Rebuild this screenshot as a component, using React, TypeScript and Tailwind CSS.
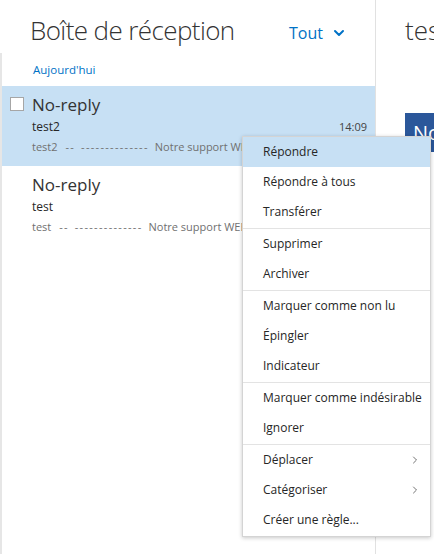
import { ChevronDown, ChevronRight } from "lucide-react";

type MenuItem = { label: string; sub?: boolean; active?: boolean };

const groups: MenuItem[][] = [
  [{ label: "Répondre", active: true }, { label: "Répondre à tous" }, { label: "Transférer" }],
  [{ label: "Supprimer" }, { label: "Archiver" }],
  [{ label: "Marquer comme non lu" }, { label: "Épingler" }, { label: "Indicateur" }],
  [{ label: "Marquer comme indésirable" }, { label: "Ignorer" }],
  [{ label: "Déplacer", sub: true }, { label: "Catégoriser", sub: true }, { label: "Créer une règle..." }],
];

const messages = [
  { from: "No-reply", subject: "test2", time: "14:09", selected: true },
  { from: "No-reply", subject: "test", time: "", selected: false },
];

export default function App() {
  return (
    <div
      className="relative flex h-[554px] w-[434px] overflow-hidden bg-white text-[#333]"
      style={{ fontFamily: '"Open Sans", "Noto Sans", sans-serif' }}
    >
      {/* message list */}
      <div className="flex w-[376px] shrink-0 flex-col border-r border-[#e1e1e1]">
        <div className="flex h-[53px] shrink-0 items-start justify-between pl-[30px] pr-[28px] pt-[12px]">
          <h1 className="text-[26px] font-light leading-[36px] tracking-[-0.6px] text-[#333]">
            Boîte de réception
          </h1>
          <button className="mt-[10px] flex items-center gap-[8px] text-[16px] leading-[22px] text-[#0072c6]">
            Tout
            <ChevronDown size={16} strokeWidth={3} />
          </button>
        </div>
        <div className="flex flex-1">
          <div className="w-[2px] bg-[#e6e6e6]" />
          <div className="flex-1">
            <div className="h-[33px] pl-[31px] pt-[8px] text-[11.5px] text-[#0072c6]">Aujourd'hui</div>
            {messages.map((m) => (
              <div
                key={m.subject}
                className={`relative h-[80px] pl-[30px] pr-[8px] pt-[7px] ${m.selected ? "bg-[#c7e0f4]" : ""}`}
              >
                {m.selected && (
                  <div className="absolute left-[8px] top-[11px] h-[14px] w-[14px] border border-[#a6a6a6] bg-white" />
                )}
                <div className="text-[17px] leading-[24px] text-[#333]">{m.from}</div>
                <div className="flex items-center justify-between pt-[1px] text-[12px] leading-[18px] text-[#262626]">
                  <span>{m.subject}</span>
                  <span className="text-[11px] text-[#444]">{m.time}</span>
                </div>
                <div className="flex whitespace-nowrap pt-[2px] text-[11px] leading-[18px] text-[#707070]">
                  <span>{m.subject}</span>
                  <span className="ml-[8px] tracking-[1.2px]">--</span>
                  <span className="ml-[6px] tracking-[1.3px]">--------------</span>
                  <span className="ml-[6px]">Notre support WEB</span>
                </div>
              </div>
            ))}
          </div>
        </div>
      </div>

      {/* reading pane */}
      <div className="flex-1 overflow-hidden pl-[29px] pt-[12px]">
        <div className="whitespace-nowrap text-[26px] font-light leading-[36px] text-[#333]">test2</div>
        <div className="mt-[65px] flex h-[39px] w-[120px] items-center whitespace-nowrap bg-[#2b579a] pl-[8px] text-[20px] text-white">
          No-reply
        </div>
      </div>

      {/* context menu */}
      <div className="absolute left-[242px] top-[136px] w-[189px] border border-[#d4d4d4] bg-white pb-[1px] shadow-[0_1px_4px_rgba(0,0,0,0.22)]">
        {groups.map((g, gi) => (
          <div key={gi} className={gi > 0 ? "mt-[1px] border-t border-[#e3e3e3]" : ""}>
            {g.map((it) => (
              <div
                key={it.label}
                className={`flex h-[30px] items-center justify-between whitespace-nowrap pl-[20px] pr-[9px] text-[12px] text-[#262626] ${
                  it.active ? "bg-[#c7e0f4]" : ""
                }`}
              >
                <span>{it.label}</span>
                {it.sub && <ChevronRight size={12} strokeWidth={1.5} className="text-[#444]" />}
              </div>
            ))}
          </div>
        ))}
      </div>
    </div>
  );
}
